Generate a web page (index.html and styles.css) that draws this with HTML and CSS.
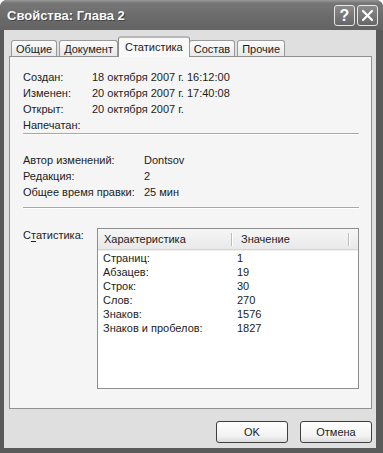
FILE: index.html
```html
<!DOCTYPE html>
<html lang="ru">
<head>
  <meta charset="UTF-8">
  <title>Свойства: Глава 2</title>
  <link rel="stylesheet" href="styles.css">
</head>
<body>
  <div class="window">
    <div class="titlebar">
      <span class="title">Свойства: Глава 2</span>
      <div class="caption-buttons">
        <span class="cap-btn help">?</span>
        <span class="cap-btn close">
          <svg width="19" height="19" viewBox="0 0 19 19"><path d="M5 5 L14 14 M14 5 L5 14" stroke="#fff" stroke-width="2.2" stroke-linecap="round"/></svg>
        </span>
      </div>
    </div>

    <div class="client">
      <div class="tabs">
        <div class="tab">Общие</div>
        <div class="tab">Документ</div>
        <div class="tab active">Статистика</div>
        <div class="tab">Состав</div>
        <div class="tab">Прочие</div>
      </div>

      <div class="panel">
        <div class="props dates">
          <div class="row"><span class="key">Создан:</span><span>18 октября 2007 г. 16:12:00</span></div>
          <div class="row"><span class="key">Изменен:</span><span>20 октября 2007 г. 17:40:08</span></div>
          <div class="row"><span class="key">Открыт:</span><span>20 октября 2007 г.</span></div>
          <div class="row"><span class="key">Напечатан:</span><span></span></div>
        </div>
        <div class="separator first"></div>

        <div class="props edits">
          <div class="row"><span class="key">Автор изменений:</span><span>Dontsov</span></div>
          <div class="row"><span class="key">Редакция:</span><span>2</span></div>
          <div class="row"><span class="key">Общее время правки:</span><span>25 мин</span></div>
        </div>
        <div class="separator second"></div>

        <div class="stats">
          <div class="stats-label">С<u>т</u>атистика:</div>
          <div class="listview">
            <div class="lv-header">
              <span class="hcol name">Характеристика</span>
              <span class="hcol value">Значение</span>
              <span class="hcol rest"></span>
            </div>
            <div class="lv-row"><span class="cell name">Страниц:</span><span class="cell">1</span></div>
            <div class="lv-row"><span class="cell name">Абзацев:</span><span class="cell">19</span></div>
            <div class="lv-row"><span class="cell name">Строк:</span><span class="cell">30</span></div>
            <div class="lv-row"><span class="cell name">Слов:</span><span class="cell">270</span></div>
            <div class="lv-row"><span class="cell name">Знаков:</span><span class="cell">1576</span></div>
            <div class="lv-row"><span class="cell name">Знаков и пробелов:</span><span class="cell">1827</span></div>
          </div>
        </div>
      </div>

      <div class="buttons">
        <button>OK</button>
        <button>Отмена</button>
      </div>
    </div>
  </div>
</body>
</html>
```

FILE: styles.css
```css
* {
  box-sizing: border-box;
  margin: 0;
  padding: 0;
}

body {
  font-family: "Liberation Sans", Arial, sans-serif;
  font-size: 11px;
  color: #1c1c1c;
  background: #fff;
}

.window {
  width: 383px;
  height: 453px;
  background: #5a5a5a;
  border-radius: 7px 7px 0 0;
  display: flex;
  flex-direction: column;
  overflow: hidden;
}

/* Title bar */
.titlebar {
  height: 30px;
  flex-shrink: 0;
  display: flex;
  align-items: center;
  justify-content: space-between;
  padding: 0 5px 0 7px;
  background: linear-gradient(#9a9a9a 0, #767676 3px, #6a6a6a 60%, #636363 100%);
}

.title {
  color: #f8f8f8;
  font-weight: bold;
  font-size: 13px;
  text-shadow: 1px 1px 0 #444;
}

.caption-buttons {
  display: flex;
  gap: 2px;
  margin-top: 1px;
}

.cap-btn {
  width: 21px;
  height: 21px;
  border: 1px solid #e6e6e6;
  border-radius: 3px;
  background: linear-gradient(#8a8a8a, #676767);
  color: #fff;
  display: flex;
  align-items: center;
  justify-content: center;
}

.cap-btn.help {
  font-size: 16px;
  font-weight: bold;
}

/* Client area */
.client {
  flex: 1;
  margin: 0 7px 5px 4px;
  background: #dfdfdf;
  padding: 6px 4px 0 5px;
  display: flex;
  flex-direction: column;
}

.tabs {
  height: 20px;
  display: flex;
  align-items: flex-end;
  padding-left: 2px;
  position: relative;
  z-index: 1;
}

.tab {
  height: 16px;
  padding: 0 4px;
  margin-right: 2px;
  line-height: 16px;
  border: 1px solid #9a9a9a;
  border-bottom: none;
  border-radius: 3px 3px 0 0;
  background: linear-gradient(#fbfbfb, #e8e8e8);
}

.tab.active {
  height: 21px;
  margin: 0 0 -1px -2px;
  padding: 0 6px;
  line-height: 18px;
  border-color: #8c8c8c;
  border-top: 2px solid #b8b8b8;
  background: #f8f8f8;
}

.tab.active + .tab {
  margin-left: -1px;
}

.panel {
  flex: 1;
  border: 1px solid #919191;
  background: #f5f5f5;
  padding: 12px 12px 0 13px;
}

.props .row {
  display: flex;
  line-height: 16px;
  height: 16px;
}

.dates .key {
  width: 69px;
}

.edits .key {
  width: 121px;
}

.separator {
  height: 2px;
  border-top: 1px solid #a8a8a8;
  border-bottom: 1px solid #fff;
}

.separator.first {
  margin-bottom: 17px;
}

.separator.second {
  margin: 7px 0 19px;
}

/* Statistics list */
.stats {
  display: flex;
}

.stats-label {
  width: 74px;
  line-height: 16px;
  margin-top: -1px;
}

.stats-label u {
  text-decoration-thickness: 1px;
  text-underline-offset: 2px;
}

.listview {
  flex: 1;
  height: 161px;
  border: 1px solid #8e8e8e;
  background: #fff;
}

.lv-header {
  height: 21px;
  display: flex;
  background: linear-gradient(#f6f6f6, #e9e9e9);
  border-bottom: 1px solid #d4d4d4;
  box-shadow: 0 1px 0 #f0f0f0;
  margin-bottom: 1px;
}

.hcol {
  line-height: 20px;
  position: relative;
}

.hcol.name {
  width: 134px;
  padding-left: 6px;
}

.hcol.value {
  width: 117px;
  padding-left: 9px;
}

.hcol.name::after,
.hcol.value::after {
  content: "";
  position: absolute;
  right: 0;
  top: 4px;
  bottom: 3px;
  width: 1px;
  background: #bdbdbd;
  box-shadow: 1px 0 0 #fff;
}

.lv-row {
  display: flex;
  height: 14px;
  line-height: 14px;
}

.cell {
  padding-left: 5px;
}

.cell.name {
  width: 134px;
}

/* Dialog buttons */
.buttons {
  height: 39px;
  flex-shrink: 0;
  display: flex;
  justify-content: flex-end;
  align-items: flex-start;
  gap: 12px;
  padding-top: 12px;
}

button {
  width: 72px;
  height: 22px;
  font-family: inherit;
  font-size: 11px;
  color: #1c1c1c;
  border: 1px solid #3e3e3e;
  border-radius: 3px;
  background: linear-gradient(#ffffff, #f2f2f2 70%, #dcdcdc);
}
```
